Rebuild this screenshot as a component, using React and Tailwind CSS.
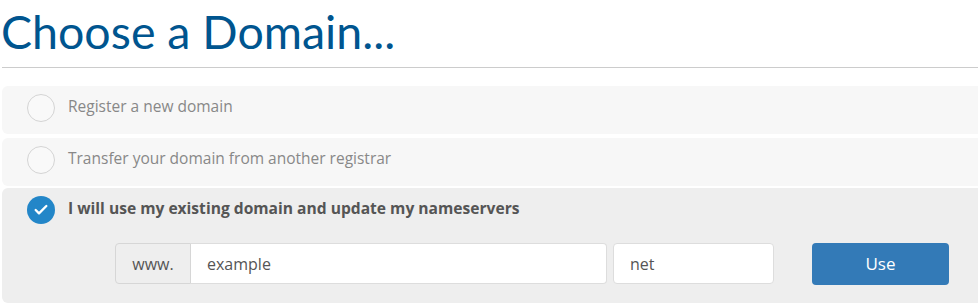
import { Check } from 'lucide-react';

const Radio = ({ checked }) =>
    checked ? (
        <div className="w-7 h-7 rounded-full bg-[#2386c8] flex items-center justify-center shrink-0">
            <Check className="text-white" size={16} strokeWidth={3.5} />
        </div>
    ) : (
        <div className="w-7 h-7 rounded-full border border-[#d4d4d4] bg-[#f9f9f9] shrink-0" />
    );

const Option = ({ label, checked, className = '', children }) => (
    <div className={`rounded-md ${checked ? 'bg-[#eeeeee]' : 'bg-[#f7f7f7]'} ${className}`}>
        <div className="flex items-start gap-[13px] pl-[25px] pt-2 h-12">
            <Radio checked={checked} />
            <span
                className={
                    checked
                        ? 'text-[15.6px] leading-[24px] font-bold text-[#555]'
                        : 'text-[15.5px] leading-[24px] text-[#888]'
                }
            >
                {label}
            </span>
        </div>
        {children}
    </div>
);

const App = () => {
    return (
        <div className="w-[978px] h-[303px] overflow-hidden bg-white font-['Open_Sans',sans-serif]">
            <h1 className="pl-[1px] pt-[3px] text-[46.5px] leading-[56px] font-normal text-[#00558f] font-['Lato',sans-serif]">
                Choose a Domain...
            </h1>
            <hr className="mt-[8px] ml-[2px] border-t border-[#cccccc]" />
            <div className="ml-[2px] mt-[18px] mr-[-6px] flex flex-col">
                <Option label="Register a new domain" />
                <Option label="Transfer your domain from another registrar" className="mt-1" />
                <Option label="I will use my existing domain and update my nameservers" checked className="mt-[2px]">
                    <div className="flex items-start pl-[113px] pt-[7px] pb-[18px]">
                        <div className="flex h-[41px] w-[492px]">
                            <span className="flex items-center px-[15px] w-[76px] justify-center text-[16px] text-[#555] bg-[#eeeeee] border border-[#d6d6d6] rounded-l-[4px]">
                                www.
                            </span>
                            <input
                                className="flex-1 px-[16px] text-[16px] text-[#555] bg-white border border-l-0 border-[#dddddd] rounded-r-[4px] outline-none"
                                defaultValue="example"
                            />
                        </div>
                        <input
                            className="ml-[6px] w-[161px] h-[41px] px-[16px] text-[16px] text-[#555] bg-white border border-[#dddddd] rounded-[4px] outline-none"
                            defaultValue="net"
                        />
                        <button className="ml-[38px] w-[137px] h-[42px] rounded-[4px] bg-[#337ab7] text-white text-[17px]">
                            Use
                        </button>
                    </div>
                </Option>
            </div>
        </div>
    );
};

export default App;
